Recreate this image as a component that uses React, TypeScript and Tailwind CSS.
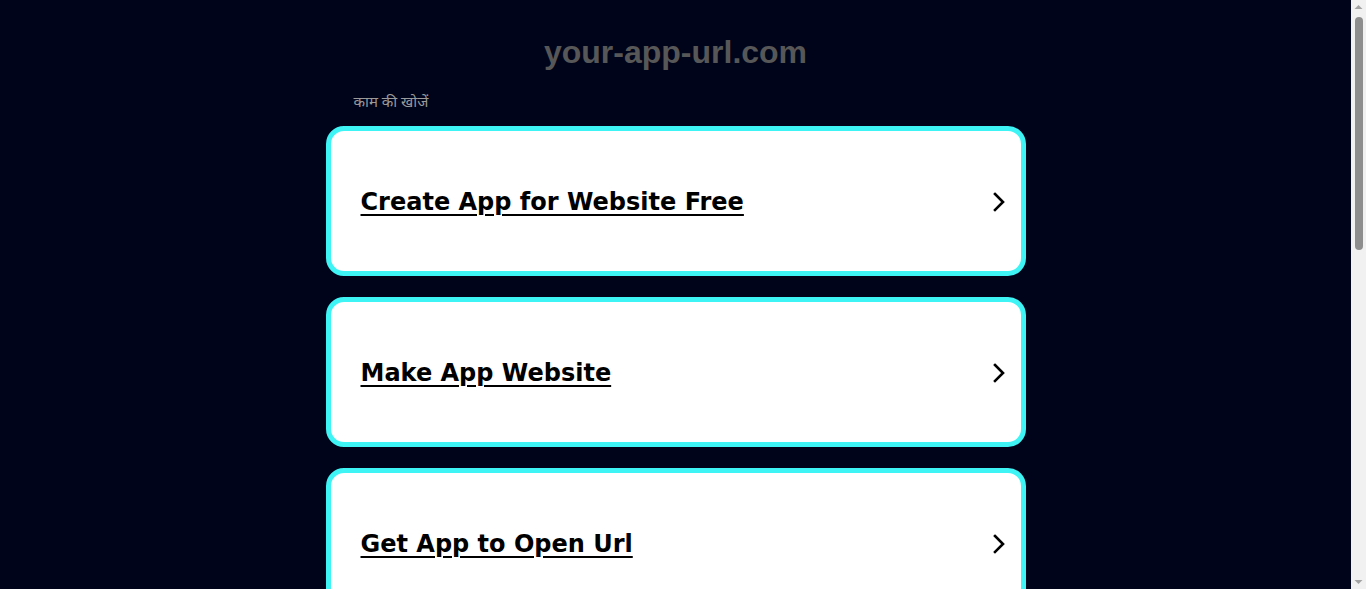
import React from 'react';

const links = [
  'Create App for Website Free',
  'Make App Website',
  'Get App to Open Url',
  'Website to App Converter',
  'Build Mobile App Online',
];

const Chevron = () => (
  <svg width="14" height="20" viewBox="0 0 14 20" fill="none" className="shrink-0">
    <path d="M3 2 L11 10 L3 18" stroke="#000" strokeWidth="2.6" strokeLinecap="square" />
  </svg>
);

// fake browser scrollbar, the reference shows a classic one
const ScrollBar = () => (
  <div className="fixed right-0 top-0 flex h-screen w-[15px] flex-col items-center bg-[#f1f1f1]">
    <svg width="15" height="15" viewBox="0 0 15 15" className="shrink-0">
      <path d="M3.5 9 L7.5 5 L11.5 9 Z" fill="#a3a3a3" />
    </svg>
    <div className="mt-[2px] h-[233px] w-[8px] rounded-full bg-[#8e8e8e]" />
    <div className="flex-1" />
    <svg width="15" height="15" viewBox="0 0 15 15" className="shrink-0">
      <path d="M3.5 6 L7.5 10 L11.5 6 Z" fill="#a3a3a3" />
    </svg>
  </div>
);

export default function App() {
  return (
    <div className="min-h-[1413px] bg-[#00041a] pr-[15px]">
      <div className="mx-auto w-[700px] pt-[30px] pb-[40px]">
        <h1 className="text-center text-[32px] font-bold leading-[44px] text-[#575757] [font-family:'Liberation_Sans',Arial,sans-serif]">
          your-app-url.com
        </h1>
        <p className="mt-[17px] pl-[28px] text-[15px] leading-[20px] text-[#9a9a9a] [font-family:'Noto_Sans','Noto_Sans_Devanagari',sans-serif]">
          काम की खोजें
        </p>
        <div className="mt-[15px] flex flex-col gap-[21px]">
          {links.map((label) => (
            <a
              key={label}
              href="#"
              className="flex h-[150px] items-center justify-between rounded-[18px] border-[5px] border-[#3ff4f4] bg-white pl-[30px] pr-[15px] pt-[2px]"
            >
              <span className="text-[24px] font-bold leading-[30px] text-black underline underline-offset-[4px] decoration-[2px] [font-family:'DejaVu_Sans',Verdana,sans-serif]">
                {label}
              </span>
              <Chevron />
            </a>
          ))}
        </div>
      </div>
      <ScrollBar />
    </div>
  );
}
